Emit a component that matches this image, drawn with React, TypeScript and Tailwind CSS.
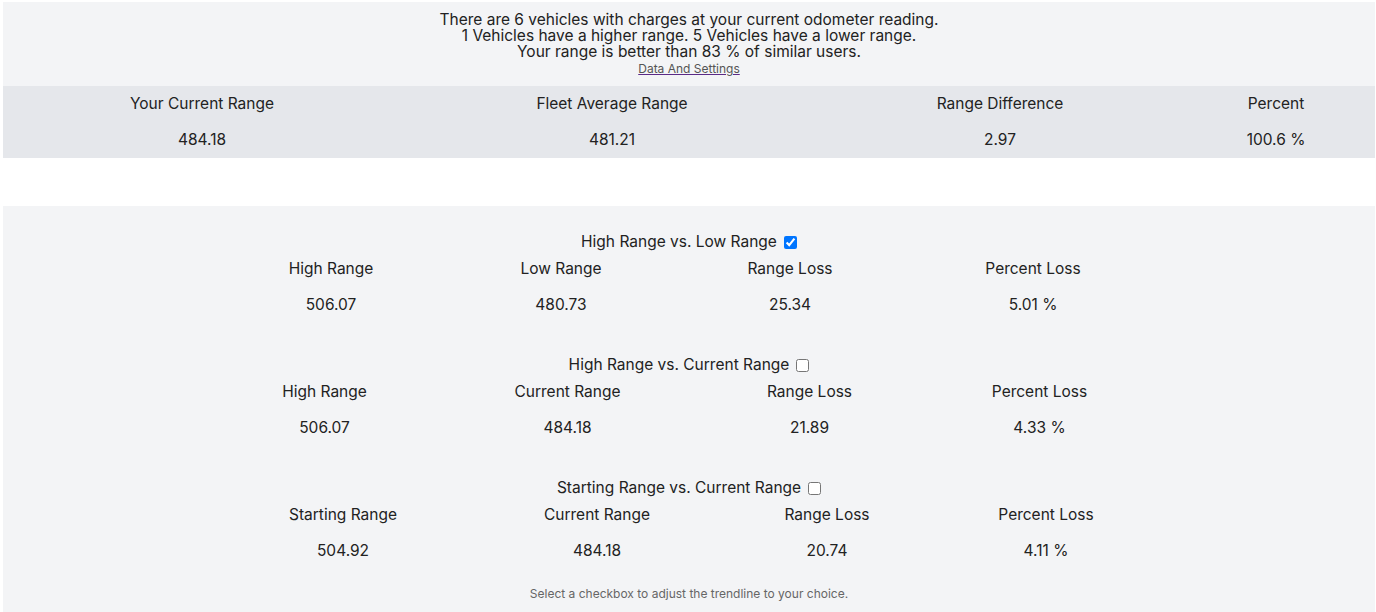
import { useState } from 'react'

// 汇总表格的一列
type Col = { label: string; value: string }

const fleetCols: Col[] = [
  { label: 'Your Current Range', value: '484.18' },
  { label: 'Fleet Average Range', value: '481.21' },
  { label: 'Range Difference', value: '2.97' },
  { label: 'Percent', value: '100.6 %' },
]

type Compare = {
  title: string
  grid: string
  cols: Col[]
}

const compares: Compare[] = [
  {
    title: 'High Range vs. Low Range',
    grid: 'ml-[213px] grid-cols-[230px_230px_228px_258px]',
    cols: [
      { label: 'High Range', value: '506.07' },
      { label: 'Low Range', value: '480.73' },
      { label: 'Range Loss', value: '25.34' },
      { label: 'Percent Loss', value: '5.01 %' },
    ],
  },
  {
    title: 'High Range vs. Current Range',
    grid: 'ml-[200px] grid-cols-[243px_243px_241px_219px]',
    cols: [
      { label: 'High Range', value: '506.07' },
      { label: 'Current Range', value: '484.18' },
      { label: 'Range Loss', value: '21.89' },
      { label: 'Percent Loss', value: '4.33 %' },
    ],
  },
  {
    title: 'Starting Range vs. Current Range',
    grid: 'ml-[213px] grid-cols-[254px_254px_206px_232px]',
    cols: [
      { label: 'Starting Range', value: '504.92' },
      { label: 'Current Range', value: '484.18' },
      { label: 'Range Loss', value: '20.74' },
      { label: 'Percent Loss', value: '4.11 %' },
    ],
  },
]

function CompareBlock({ item, checked, onToggle }: { item: Compare; checked: boolean; onToggle: () => void }) {
  return (
    <div>
      <div className="flex items-center justify-center h-4 leading-4">
        <span>{item.title}</span>
        <input
          type="checkbox"
          checked={checked}
          onChange={onToggle}
          className="ml-[7px] w-[13px] h-[13px] m-0"
        />
      </div>
      <div className={`grid mt-px ${item.grid}`}>
        {item.cols.map(c => (
          <div key={c.label} className="h-9 flex items-center justify-center">{c.label}</div>
        ))}
        {item.cols.map(c => (
          <div key={c.label + '-v'} className="h-9 flex items-center justify-center">{c.value}</div>
        ))}
      </div>
    </div>
  )
}

export default function App() {
  const [selected, setSelected] = useState(0)

  return (
    <div className="pl-[3px] pr-px pt-[2px] text-[15.5px] text-[#222] font-['Inter','Liberation_Sans',sans-serif]">
      {/* 车队对比 */}
      <div className="bg-gray-100">
        <div className="pt-[10px] text-center leading-4">
          <p>There are 6 vehicles with charges at your current odometer reading.</p>
          <p>1 Vehicles have a higher range. 5 Vehicles have a lower range.</p>
          <p>Your range is better than 83 % of similar users.</p>
          <a
            href="#"
            className="inline-block mt-[1px] mb-[9px] text-[12px] leading-[16px] text-[#555] underline decoration-[#5b2a86]"
          >
            Data And Settings
          </a>
        </div>
        <div className="bg-gray-200 grid grid-cols-[398px_422px_354px_1fr]">
          {fleetCols.map(c => (
            <div key={c.label} className="h-9 flex items-center justify-center">{c.label}</div>
          ))}
          {fleetCols.map(c => (
            <div key={c.label + '-v'} className="h-9 flex items-center justify-center">{c.value}</div>
          ))}
        </div>
      </div>

      {/* 续航损失对比 */}
      <div className="mt-12 bg-gray-100 pt-7 pb-[10px]">
        <div className="flex flex-col gap-[34px]">
          {compares.map((c, i) => (
            <CompareBlock key={c.title} item={c} checked={selected === i} onToggle={() => setSelected(i)} />
          ))}
        </div>
        <p className="mt-[17px] text-center text-[12px] leading-4 text-[#666]">
          Select a checkbox to adjust the trendline to your choice.
        </p>
      </div>
    </div>
  )
}
